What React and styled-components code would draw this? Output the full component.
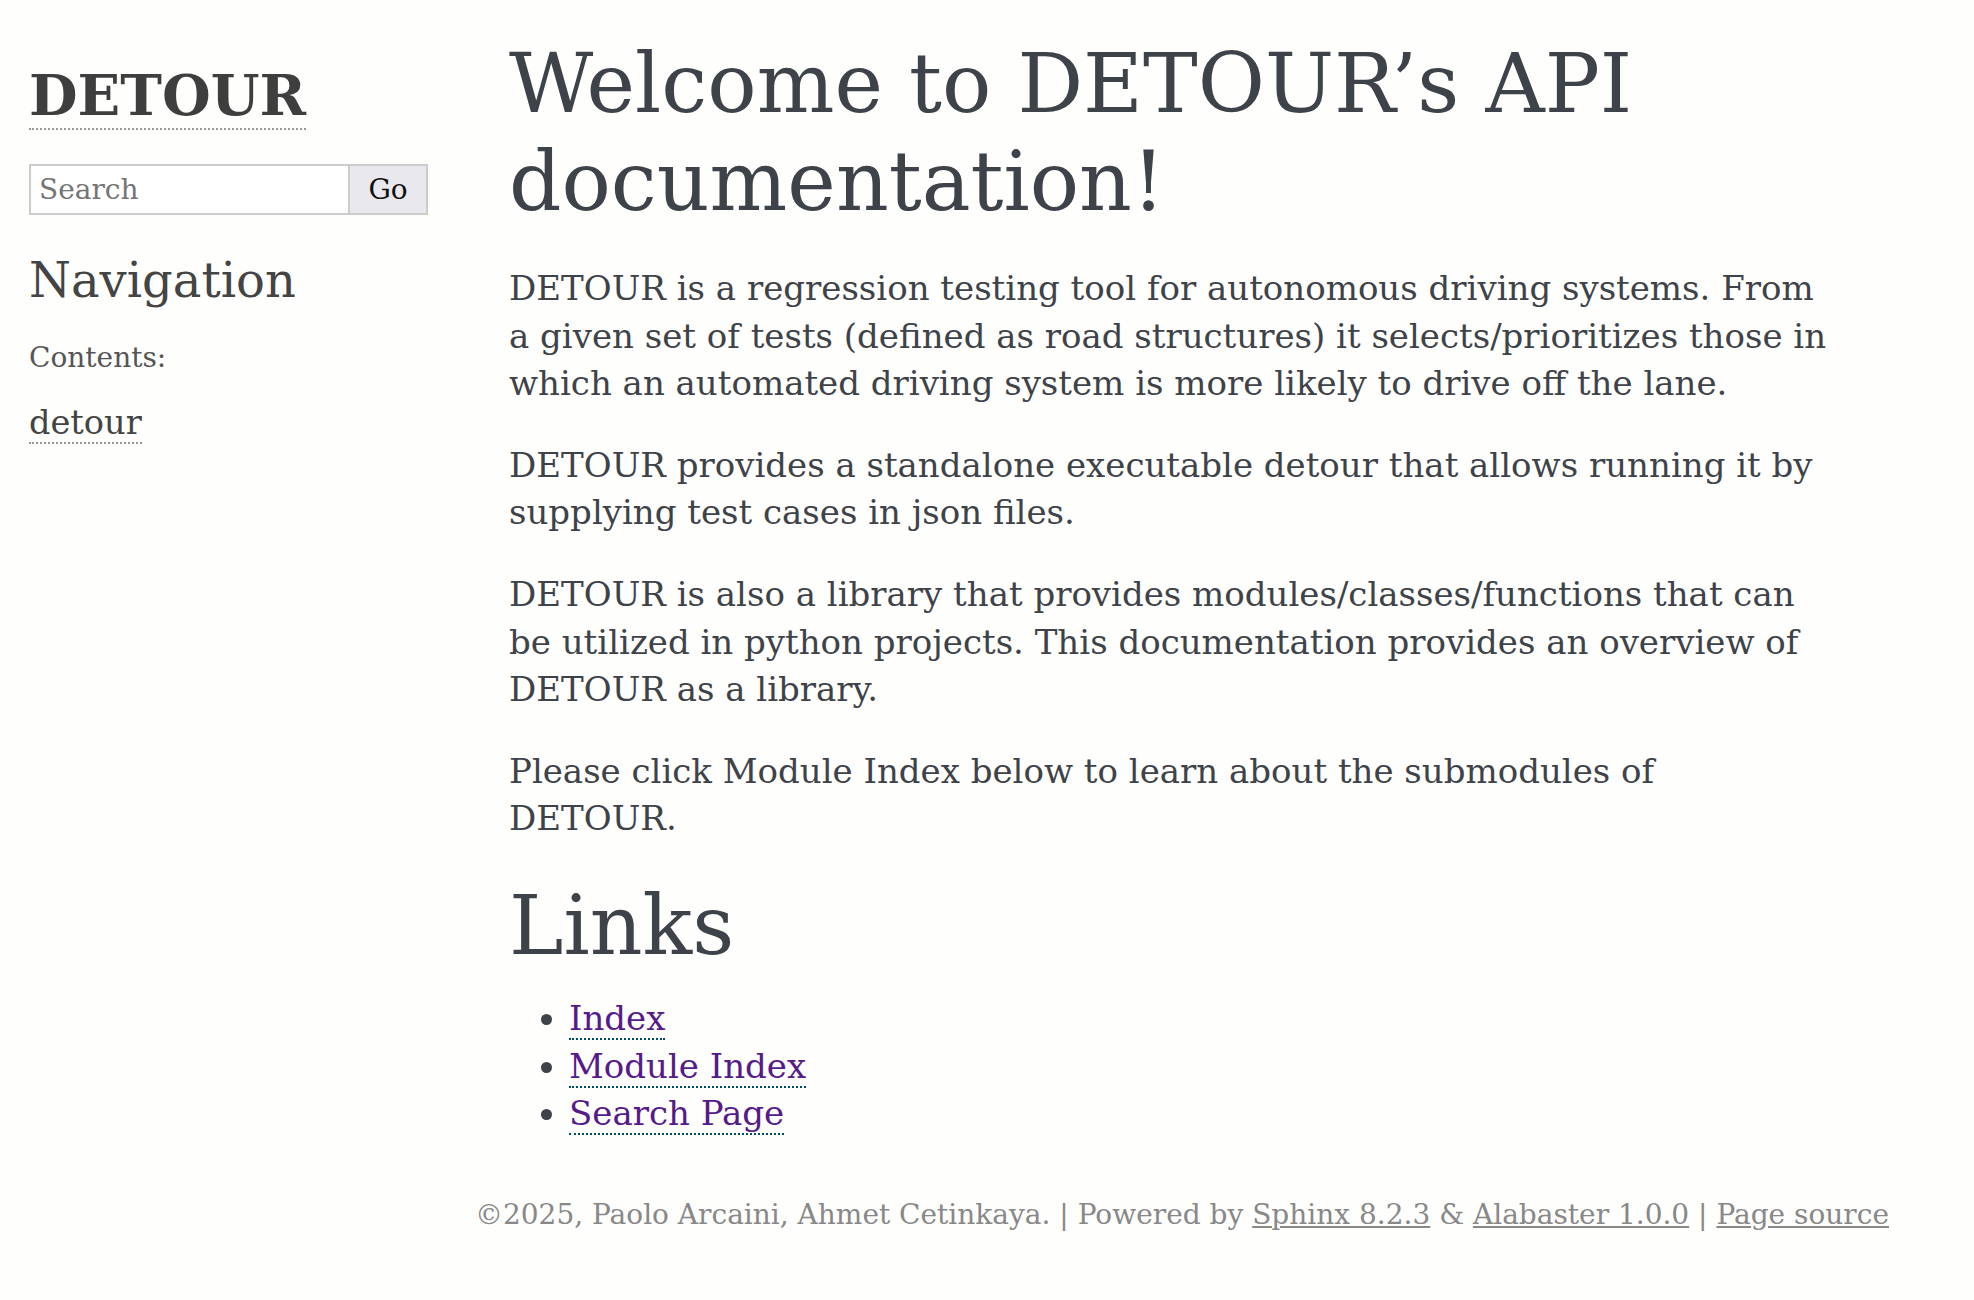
import React from "react";
import styled, { createGlobalStyle } from "styled-components";

const GlobalStyle = createGlobalStyle`
  html, body {
    margin: 0;
    padding: 0;
    background: #fefefc;
  }
  body {
    font-family: "DejaVu Serif", Georgia, serif;
    color: #3e4349;
  }
`;

const Page = styled.div`
  width: 1880px;
  margin-left: 9px;
`;

const Document = styled.div`
  display: flex;
  align-items: flex-start;
`;

const Sidebar = styled.div`
  width: 400px;
  flex: 0 0 400px;
  padding: 62px 20px 0 20px;
  font-size: 28px;
  line-height: 1.5;
`;

const Logo = styled.h1`
  margin: 0;
  font-size: 56px;
  font-weight: bold;
  line-height: normal;

  a {
    color: #3e3e3e;
    text-decoration: none;
    border-bottom: 2px dotted #999;
  }
`;

const SearchForm = styled.form`
  display: flex;
  margin: 36px 0 0;
  height: 51px;
`;

const SearchInput = styled.input`
  box-sizing: border-box;
  width: 319px;
  height: 51px;
  border: 2px solid #ccc;
  border-right: none;
  padding: 0 8px;
  font-family: "DejaVu Serif", Georgia, serif;
  font-size: 28px;
  color: #222;
  background: #fff;

  &::placeholder {
    color: #757575;
  }
`;

const GoButton = styled.button`
  box-sizing: border-box;
  width: 80px;
  height: 51px;
  border: 2px solid #ccc;
  background: #e9e9ed;
  font-family: "DejaVu Serif", Georgia, serif;
  font-size: 28px;
  color: #111;
  padding: 0;
`;

const SideHeading = styled.h3`
  margin: 37px 0 0;
  font-size: 48px;
  font-weight: normal;
  line-height: normal;
  color: #444;
`;

const Caption = styled.p`
  margin: 29px 0 0;
  font-size: 28px;
  color: #555;
`;

const TocList = styled.ul`
  list-style: none;
  margin: 19px 0 0;
  padding: 0;

  a {
    font-size: 33.6px;
    color: #444;
    text-decoration: none;
    border-bottom: 2px dotted #999;
  }
`;

const Body = styled.div`
  flex: 1;
  padding: 35px 60px 0 60px;
  font-size: 34px;
  line-height: 1.4;
`;

const Title = styled.h1`
  margin: 0 0 20px;
  font-size: 82px;
  font-weight: normal;
  line-height: 98px;
  color: #3e4349;
`;

const Para = styled.p`
  margin: 34px 0;
`;

const LinkList = styled.ul`
  margin: 20px 0;
  padding-left: 60px;

  li {
    line-height: 1.4;
  }

  a {
    color: #551a8b;
    text-decoration: none;
    border-bottom: 2px dotted #004b6b;
  }
`;

const Footer = styled.div`
  margin-top: 37px;
  padding-bottom: 60px;
  text-align: right;
  font-size: 28px;
  line-height: 1.4;
  color: #888;

  a {
    color: #888;
    text-decoration: underline;
  }
`;

export default function App() {
  return (
    <>
      <GlobalStyle />
      <Page>
        <Document>
          <Sidebar>
            <Logo>
              <a href="#">DETOUR</a>
            </Logo>
            <SearchForm onSubmit={(e) => e.preventDefault()}>
              <SearchInput type="text" placeholder="Search" />
              <GoButton type="submit">Go</GoButton>
            </SearchForm>
            <SideHeading>Navigation</SideHeading>
            <Caption>Contents:</Caption>
            <TocList>
              <li>
                <a href="#">detour</a>
              </li>
            </TocList>
          </Sidebar>
          <Body>
            <Title>Welcome to DETOUR’s API documentation!</Title>
            <Para>
              DETOUR is a regression testing tool for autonomous driving systems. From a given set
              of tests (defined as road structures) it selects/prioritizes those in which an
              automated driving system is more likely to drive off the lane.
            </Para>
            <Para>
              DETOUR provides a standalone executable detour that allows running it by supplying
              test cases in json files.
            </Para>
            <Para>
              DETOUR is also a library that provides modules/classes/functions that can be utilized
              in python projects. This documentation provides an overview of DETOUR as a library.
            </Para>
            <Para>Please click Module Index below to learn about the submodules of DETOUR.</Para>
            <Title>Links</Title>
            <LinkList>
              <li>
                <a href="#">Index</a>
              </li>
              <li>
                <a href="#">Module Index</a>
              </li>
              <li>
                <a href="#">Search Page</a>
              </li>
            </LinkList>
          </Body>
        </Document>
        <Footer>
          ©2025, Paolo Arcaini, Ahmet Cetinkaya. | Powered by <a href="#">Sphinx 8.2.3</a> &amp;{" "}
          <a href="#">Alabaster 1.0.0</a> | <a href="#">Page source</a>
        </Footer>
      </Page>
    </>
  );
}
